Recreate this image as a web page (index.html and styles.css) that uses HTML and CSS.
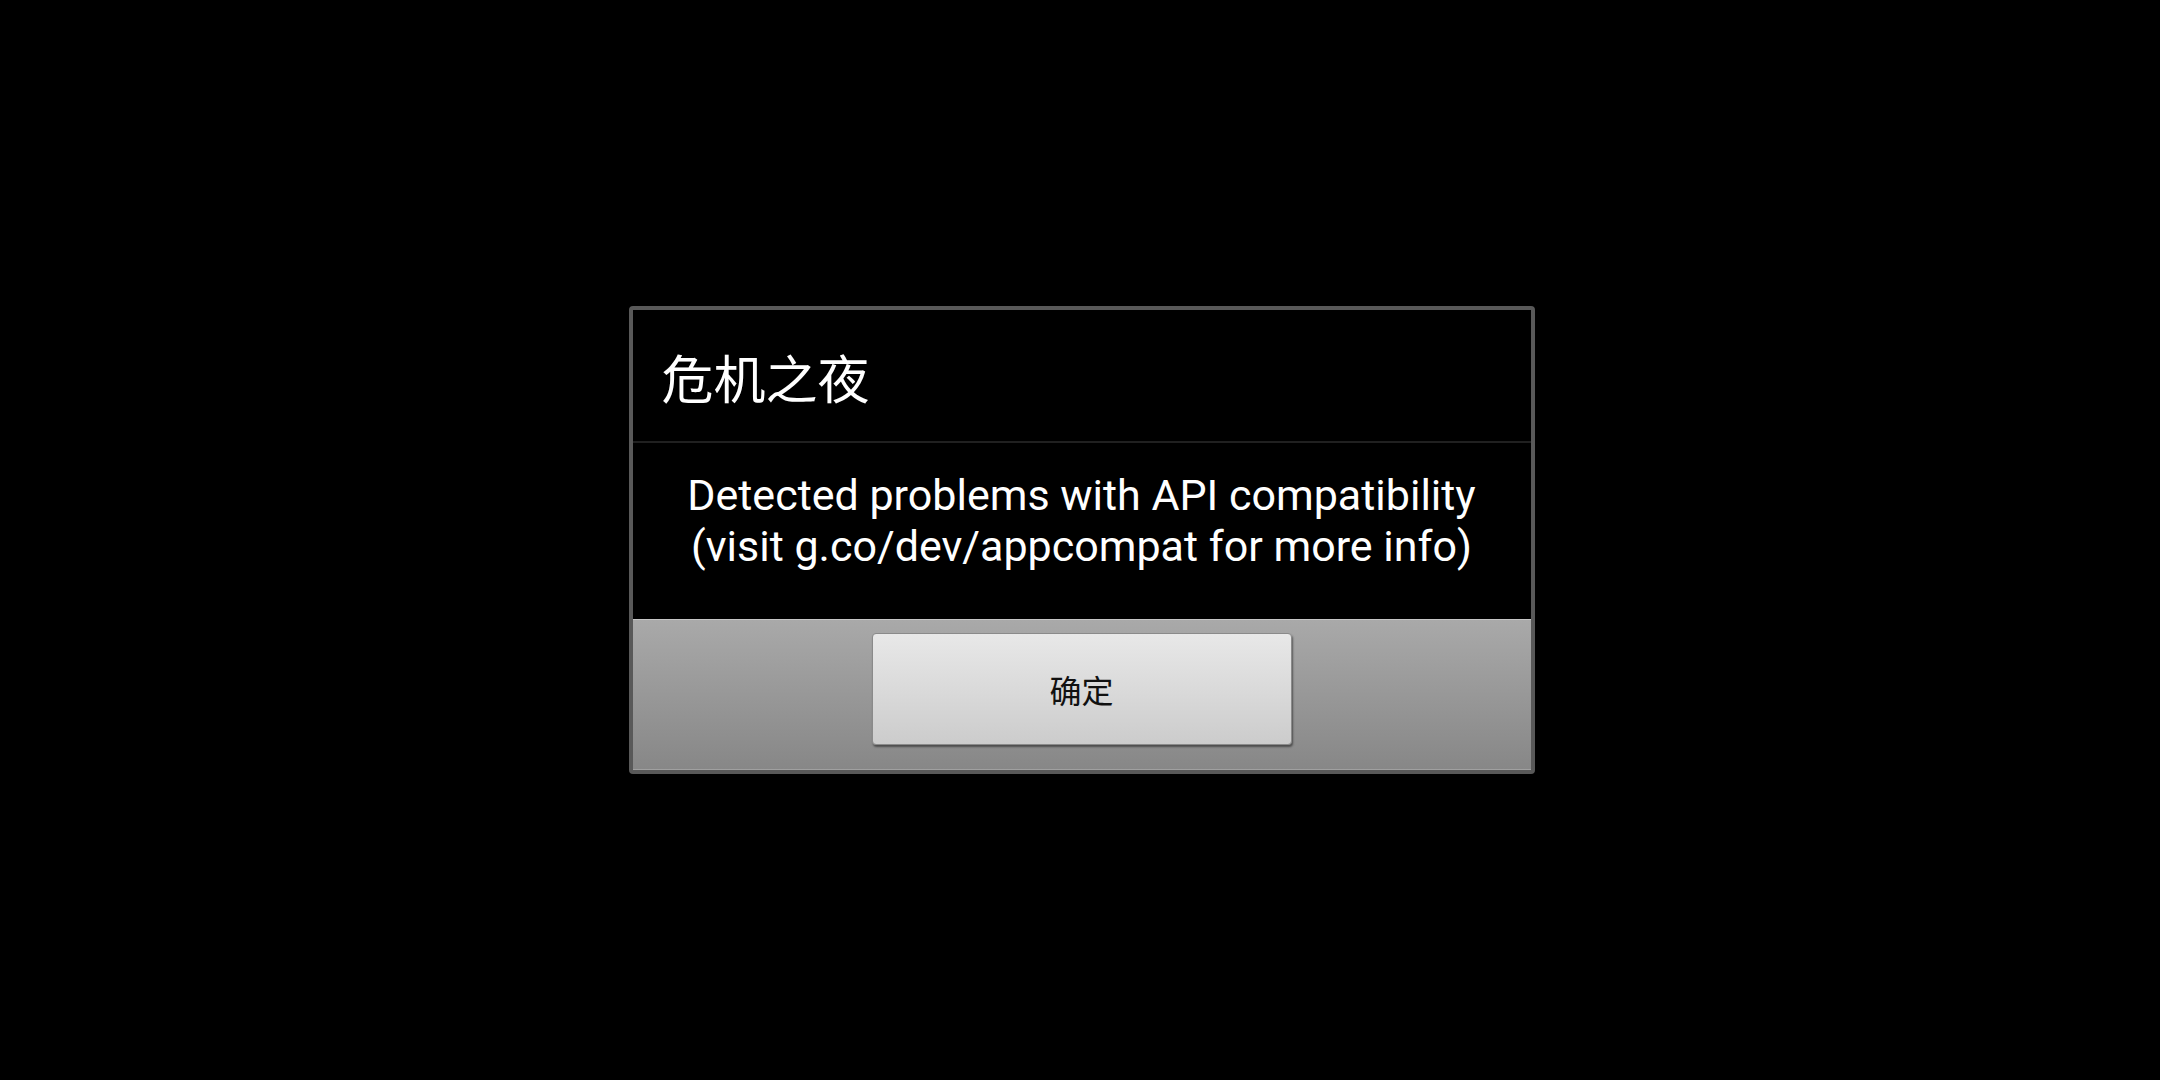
FILE: index.html
```html
<!DOCTYPE html>
<html lang="zh">
<head>
<meta charset="utf-8">
<title>危机之夜</title>
<link rel="stylesheet" href="styles.css">
</head>
<body>
<div class="screen">
  <div class="dialog">
    <div class="dialog-title">危机之夜</div>
    <div class="dialog-message">
      <p>Detected problems with API compatibility<br>(visit g.co/dev/appcompat for more info)</p>
    </div>
    <div class="dialog-buttons">
      <button class="btn">确定</button>
    </div>
  </div>
</div>
</body>
</html>
```

FILE: styles.css
```css
html, body {
  margin: 0;
  padding: 0;
  background: #000;
}

.screen {
  box-sizing: border-box;
  width: 2160px;
  height: 1080px;
  padding-left: 3px;
  display: flex;
  align-items: center;
  justify-content: center;
}

.dialog {
  box-sizing: border-box;
  width: 906px;
  height: 468px;
  border: 4px solid #595959;
  border-radius: 4px;
  background: #000;
  display: flex;
  flex-direction: column;
  overflow: hidden;
}

.dialog-title {
  box-sizing: border-box;
  height: 133px;
  padding: 30px 0 0 29px;
  border-bottom: 2px solid #202020;
  color: #fff;
  font-family: "Noto Sans CJK SC", "Noto Sans", sans-serif;
  font-size: 52px;
  line-height: 74px;
}

.dialog-message {
  box-sizing: border-box;
  height: 176px;
  padding-top: 27px;
  display: flex;
  justify-content: center;
}

.dialog-message p {
  margin: 0;
  color: #fff;
  font-family: Roboto, "Liberation Sans", sans-serif;
  font-size: 43px;
  line-height: 51px;
  text-align: center;
}

.dialog-buttons {
  flex: 1;
  display: flex;
  justify-content: center;
  align-items: flex-start;
  padding-top: 13px;
  border-top: 1px solid #c6c6c6;
  border-bottom: 1px solid #a0a0a0;
  background: linear-gradient(to bottom, #a9a9a9 0%, #878787 100%);
}

.btn {
  box-sizing: border-box;
  width: 420px;
  height: 112px;
  border: 1px solid #8a8a8a;
  border-radius: 4px;
  background: linear-gradient(to bottom, #e8e8e8 0%, #cccccc 100%);
  box-shadow: 1px 2px 2px rgba(0, 0, 0, 0.45);
  color: #111;
  font-family: "Noto Sans CJK SC", "Noto Sans", sans-serif;
  font-size: 32px;
  padding: 0;
}
```
